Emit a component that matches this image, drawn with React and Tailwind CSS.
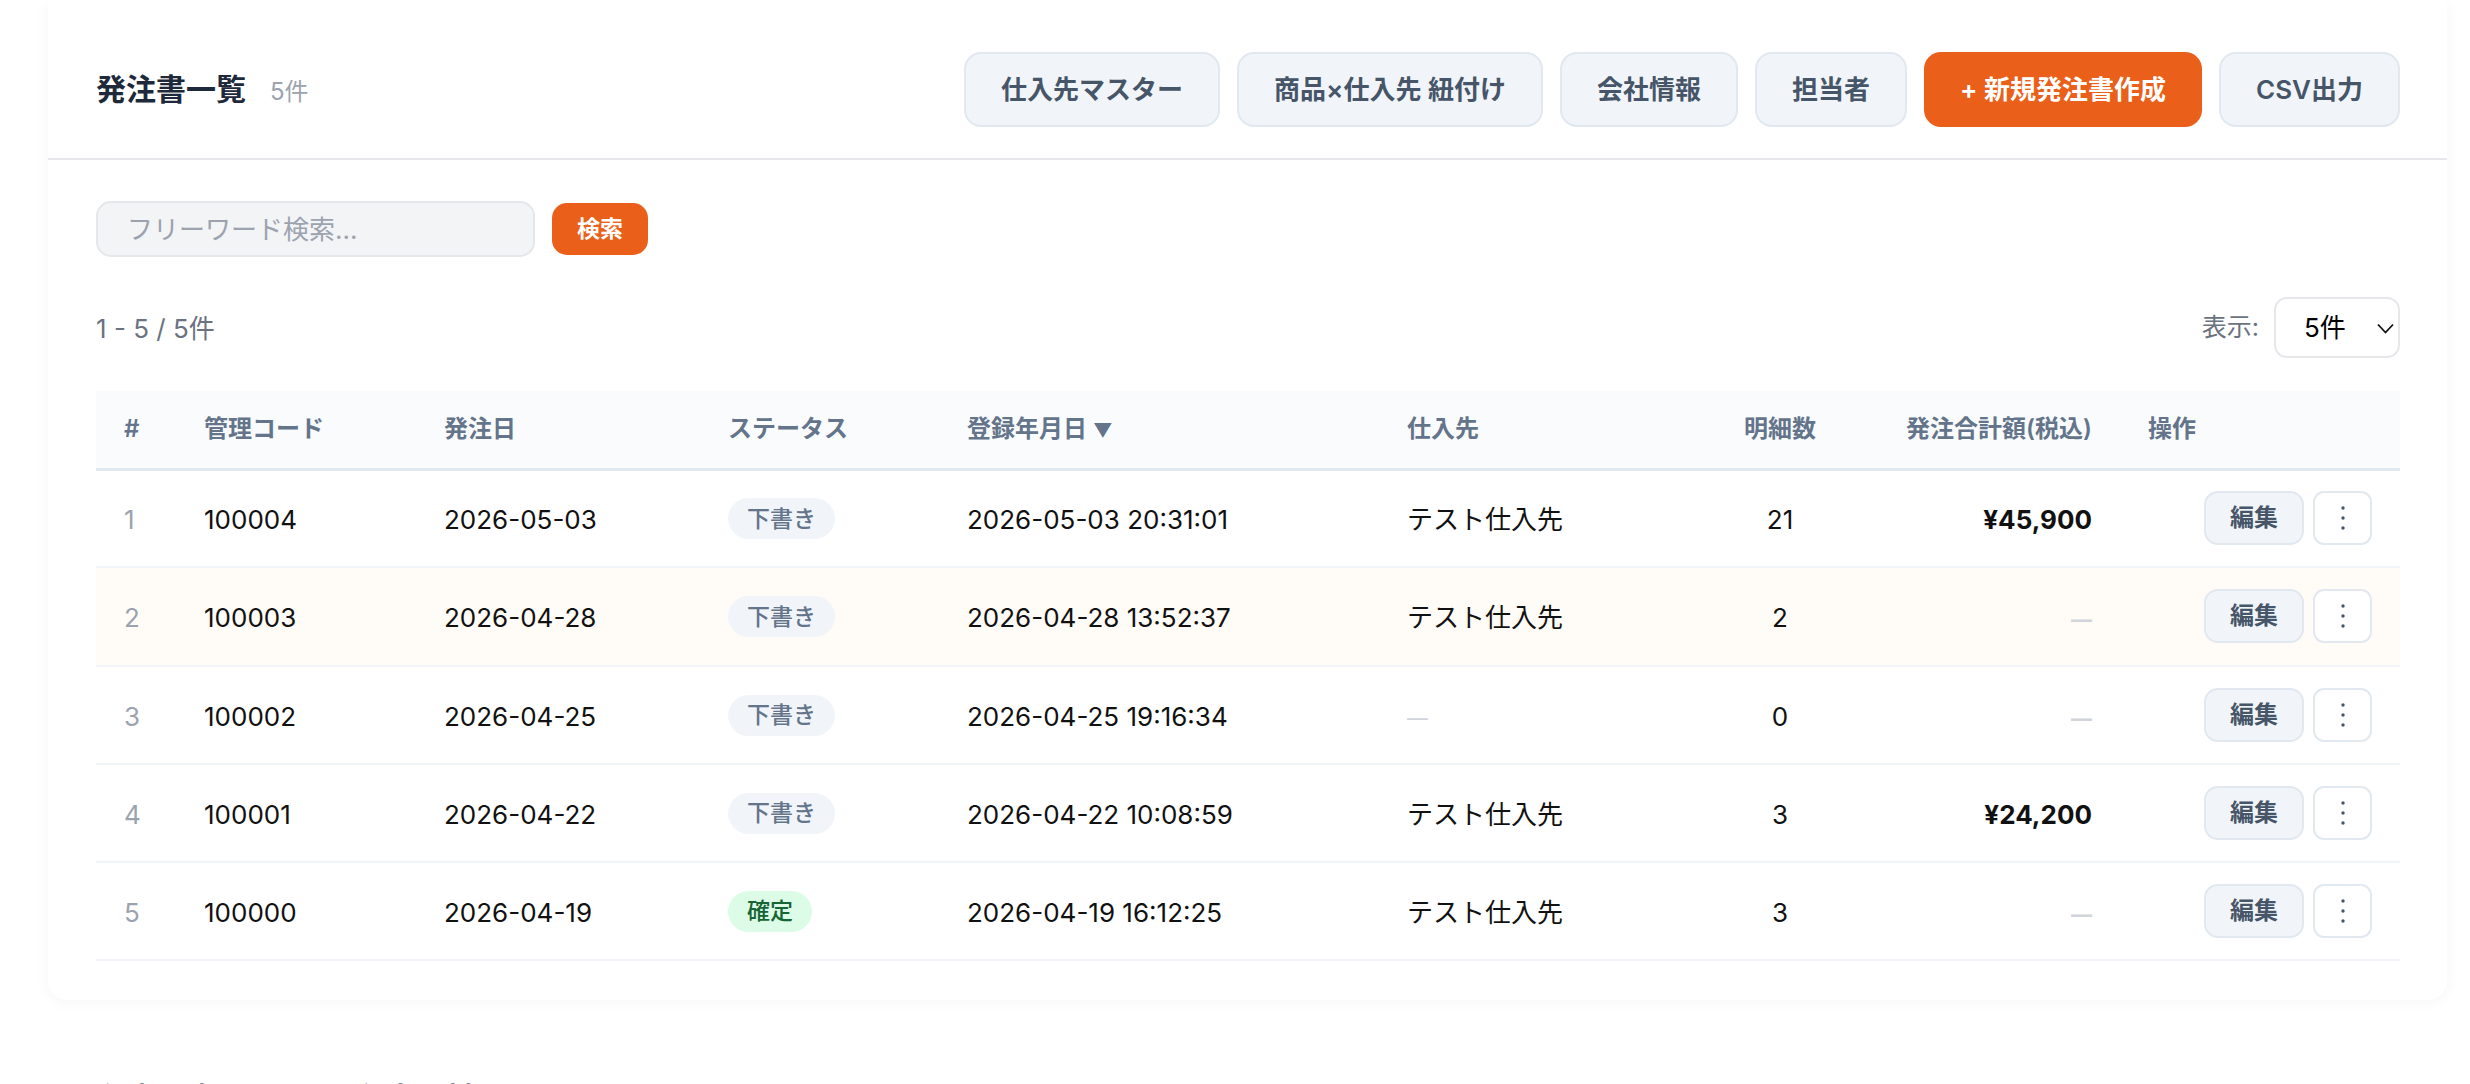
const rows = [
  { n: 1, code: "100004", date: "2026-05-03", st: "下書き", reg: "2026-05-03 20:31:01", sup: "テスト仕入先", cnt: "21", total: "¥45,900" },
  { n: 2, code: "100003", date: "2026-04-28", st: "下書き", reg: "2026-04-28 13:52:37", sup: "テスト仕入先", cnt: "2", total: null, hi: true },
  { n: 3, code: "100002", date: "2026-04-25", st: "下書き", reg: "2026-04-25 19:16:34", sup: null, cnt: "0", total: null },
  { n: 4, code: "100001", date: "2026-04-22", st: "下書き", reg: "2026-04-22 10:08:59", sup: "テスト仕入先", cnt: "3", total: "¥24,200" },
  { n: 5, code: "100000", date: "2026-04-19", st: "確定", reg: "2026-04-19 16:12:25", sup: "テスト仕入先", cnt: "3", total: null },
];

const font = { fontFamily: '"Inter", "Noto Sans CJK JP", sans-serif' };

function HeadButton({ children }) {
  return (
    <button className="h-[75px] px-[35px] rounded-[17px] border-2 border-[#e2e8f0] bg-[#f1f5f9] text-[26px] font-semibold text-[#475569] whitespace-nowrap">
      {children}
    </button>
  );
}

function Dash() {
  return <span className="text-[21px] text-[#d1d5db]">—</span>;
}

export default function App() {
  return (
    <div style={font} className="h-[1084px] overflow-hidden bg-white px-[48px] text-[26px] text-[#111111]">
      <div className="h-[1000px] w-[2399px] rounded-b-[19px] bg-white shadow-[0_2px_16px_rgba(15,23,42,0.04)]">
        <div className="flex h-[160px] items-center justify-between border-b-2 border-[#e5e7eb] pl-[48px] pr-[47px] pt-[20px]">
          <div className="flex items-baseline gap-[24px]">
            <h1 className="text-[30px] font-bold text-[#1e293b]">発注書一覧</h1>
            <span className="text-[24px] text-[#9ca3af]">5件</span>
          </div>
          <div className="flex items-center gap-[17px]">
            <HeadButton>仕入先マスター</HeadButton>
            <HeadButton>商品×仕入先 紐付け</HeadButton>
            <HeadButton>会社情報</HeadButton>
            <HeadButton>担当者</HeadButton>
            <button className="h-[75px] px-[36px] rounded-[17px] bg-[#ea5f1a] text-[26px] font-semibold text-white whitespace-nowrap">
              + 新規発注書作成
            </button>
            <HeadButton>CSV出力</HeadButton>
          </div>
        </div>

        <div className="pl-[48px] pr-[47px]">
          <div className="flex items-center gap-[17px] pt-[41px]">
            <input
              placeholder="フリーワード検索..."
              className="h-[56px] w-[439px] rounded-[15px] border-2 border-[#e5e7eb] bg-[#f3f4f6] px-[29px] text-[26px] text-[#0f172a] placeholder:text-[#9ca3af]"
            />
            <button className="h-[52px] w-[96px] rounded-[15px] bg-[#ea5f1a] text-[23px] font-semibold text-white">検索</button>
          </div>

          <div className="mt-[40px] flex h-[61px] items-center justify-between">
            <span className="pt-[2px] text-[26px] text-[#6b7280]">1 - 5 / 5件</span>
            <div className="flex items-center gap-[15px]">
              <span className="text-[25px] text-[#6b7280]">表示:</span>
              <div className="relative">
                <select className="block h-[61px] w-[126px] appearance-none rounded-[13px] border-2 border-[#e5e7eb] bg-white pl-[28px] text-[26px] text-black">
                  <option>5件</option>
                </select>
                <svg className="pointer-events-none absolute right-[6px] top-[26px]" width="17" height="11" viewBox="0 0 17 11" fill="none" stroke="#111111" strokeWidth="1.8">
                  <path d="M1 1.5 L8.5 9.5 L16 1.5" />
                </svg>
              </div>
            </div>
          </div>

          <table className="mt-[33px] w-[2304px] table-fixed border-collapse">
            <thead>
              <tr className="h-[78px] border-b-[3px] border-[#e2e8f0] bg-[#f9fbfd] text-left text-[24px] font-semibold text-[#64748b]">
                <th className="w-[80px] pl-[28px] font-semibold">#</th>
                <th className="w-[239px] pl-[28px] font-semibold">管理コード</th>
                <th className="w-[285px] pl-[29px] font-semibold">発注日</th>
                <th className="w-[238px] pl-[28px] font-semibold">ステータス</th>
                <th className="w-[440px] pl-[29px] font-semibold">
                  登録年月日 <span className="text-[19px]">▼</span>
                </th>
                <th className="w-[299px] pl-[29px] font-semibold">仕入先</th>
                <th className="w-[206px] text-center font-semibold">明細数</th>
                <th className="w-[238px] pr-[29px] text-right font-semibold">発注合計額(税込)</th>
                <th className="pl-[27px] font-semibold">操作</th>
              </tr>
            </thead>
            <tbody>
              {rows.map((r) => (
                <tr key={r.n} className={`h-[98.25px] border-b-2 border-[#f1f5f9] ${r.hi ? "bg-[#fffbf7]" : ""}`}>
                  <td className="pl-[28px] pt-[3px] text-[#9ca3af]">{r.n}</td>
                  <td className="pl-[28px] pt-[3px]">{r.code}</td>
                  <td className="pl-[29px] pt-[3px]">{r.date}</td>
                  <td className="pl-[28px]">
                    <span
                      className={`inline-flex h-[41px] items-center rounded-full px-[19px] text-[23px] font-medium ${
                        r.st === "確定" ? "bg-[#dcfce7] text-[#166534]" : "bg-[#f1f5f9] text-[#64748b]"
                      }`}
                    >
                      {r.st}
                    </span>
                  </td>
                  <td className="pl-[29px] pt-[3px]">{r.reg}</td>
                  <td className="pl-[29px] pt-[3px]">{r.sup ?? <Dash />}</td>
                  <td className="pt-[3px] text-center">{r.cnt}</td>
                  <td className="pr-[29px] pt-[3px] text-right font-bold">{r.total ?? <Dash />}</td>
                  <td>
                    <div className="flex items-center justify-end gap-[9px] pr-[28px]">
                      <button className="h-[54px] w-[100px] rounded-[14px] border-2 border-[#e2e8f0] bg-[#f1f5f9] text-[24px] font-semibold text-[#475569]">編集</button>
                      <button className="flex h-[54px] w-[59px] items-center justify-center rounded-[11px] border-2 border-[#e2e8f0] bg-white">
                        <svg width="6" height="26" viewBox="0 0 6 26" fill="#475569">
                          <circle cx="3" cy="3" r="1.7" />
                          <circle cx="3" cy="13" r="1.7" />
                          <circle cx="3" cy="23" r="1.7" />
                        </svg>
                      </button>
                    </div>
                  </td>
                </tr>
              ))}
            </tbody>
          </table>
        </div>
      </div>
      <h2 className="mt-[76px] pl-[48px] text-[30px] font-bold text-[#1e293b]">在庫入庫品 (ハウス在庫・対面)</h2>
    </div>
  );
}
